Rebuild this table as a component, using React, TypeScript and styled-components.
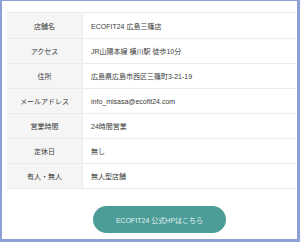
import React from 'react';
import styled, { createGlobalStyle } from 'styled-components';

const GlobalStyle = createGlobalStyle`
  html, body {
    margin: 0;
    padding: 0;
    background: #ffffff;
  }
  body {
    font-family: "Liberation Sans", "Noto Sans CJK JP", sans-serif;
  }
`;

const Frame = styled.div`
  box-sizing: border-box;
  width: 300px;
  height: 242px;
  border-style: solid;
  border-color: #8d9fd5;
  border-width: 1px 3px 3px 2px;
  padding: 11px 1px 0 5px;
  background: #ffffff;
  display: flex;
  flex-direction: column;
`;

const InfoTable = styled.div`
  display: flex;
  flex-direction: column;
  border-top: 1px solid #ececec;
`;

const Row = styled.div<{ $first?: boolean }>`
  display: grid;
  grid-template-columns: 76px 1fr;
  height: ${p => (p.$first ? 25 : 24)}px;
  border-bottom: 1px solid #ececec;
`;

const Label = styled.div`
  background: #f5f5f5;
  color: #3a3a3a;
  font-size: 7px;
  display: flex;
  align-items: center;
  justify-content: center;
  border-right: 1px solid #ededed;
`;

const Value = styled.div`
  color: #3a3a3a;
  font-size: 7px;
  display: flex;
  align-items: center;
  padding-left: 8px;
`;

const ButtonRow = styled.div`
  display: flex;
  justify-content: center;
  padding-left: 16px;
  margin-top: 17px;
`;

const LinkButton = styled.a`
  width: 133px;
  height: 27px;
  border-radius: 14px;
  background: #4c9d98;
  color: #e2f1ef;
  font-size: 7px;
  display: flex;
  align-items: center;
  justify-content: center;
  text-decoration: none;
`;

const rows: [string, string][] = [
  ['店舗名', 'ECOFIT24 広島三篠店'],
  ['アクセス', 'JR山陽本線 横川駅 徒歩10分'],
  ['住所', '広島県広島市西区三篠町3-21-19'],
  ['メールアドレス', 'info_misasa@ecofit24.com'],
  ['営業時間', '24時間営業'],
  ['定休日', '無し'],
  ['有人・無人', '無人型店舗'],
];

const App: React.FC = () => (
  <>
    <GlobalStyle />
    <Frame>
      <InfoTable>
        {rows.map(([label, value], i) => (
          <Row key={label} $first={i === 0}>
            <Label>{label}</Label>
            <Value>{value}</Value>
          </Row>
        ))}
      </InfoTable>
      <ButtonRow>
        <LinkButton href="#">ECOFIT24 公式HPはこちら</LinkButton>
      </ButtonRow>
    </Frame>
  </>
);

export default App;
